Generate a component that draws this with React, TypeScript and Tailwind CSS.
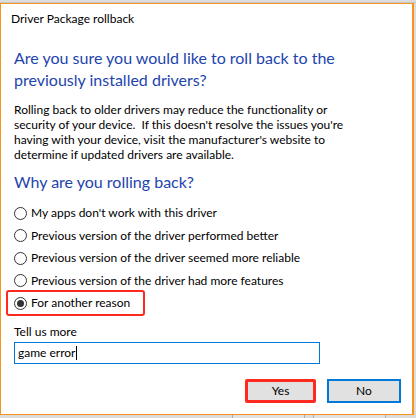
import React from 'react'

const reasons = [
  "My apps don't work with this driver",
  'Previous version of the driver performed better',
  'Previous version of the driver seemed more reliable',
  'Previous version of the driver had more features',
  'For another reason',
]

const bodyLines = [
  'Rolling back to older drivers may reduce the functionality or',
  "security of your device.\u00a0 If this doesn't resolve the issues you're",
  "having with your device, visit the manufacturer's website to",
  'determine if updated drivers are available.',
]

const Radio = ({ checked }: { checked?: boolean }) => (
  <span className="w-[13px] h-[13px] rounded-full border border-[#333] bg-white flex items-center justify-center shrink-0">
    {checked && <span className="w-[7px] h-[7px] rounded-full bg-[#333]" />}
  </span>
)

export default function App() {
  const font = { fontFamily: 'Lato, "Noto Sans", sans-serif' }
  return (
    <div className="w-[416px] h-[418px] bg-[#dcdcdc] overflow-hidden relative" style={font}>
      <div className="h-[3px] border-b border-[#c8c8c8]" />
      <div className="w-[414px] h-[412px] bg-white border border-[#f7941d] border-r-2 flex flex-col">
        <div className="pt-[7px] pl-[10px] text-[12px] leading-[16px] text-black">Driver Package rollback</div>

        <div className="px-[13px] flex flex-col">
          <div className="mt-[20px] text-[16px] leading-[22px] text-[#1e44ae] whitespace-nowrap">
            Are you sure you would like to roll back to the<br />previously installed drivers?
          </div>
          <div className="mt-[11px] text-[12px] leading-[15px] text-black whitespace-nowrap">
            {bodyLines.map(l => <div key={l}>{l}</div>)}
          </div>
          <div className="mt-[9px] text-[16px] leading-[22px] text-[#1e44ae]">Why are you rolling back?</div>

          <div className="mt-[9px] flex flex-col">
            {reasons.map((r, i) => (
              <div key={r} className="h-[22.5px] flex items-center gap-[4px] text-[12px] text-black relative">
                <Radio checked={i === 4} />
                <span>{r}</span>
                {i === 4 && <span className="absolute left-[-8px] top-[-2px] w-[139px] h-[26px] border-2 border-[#ff2a1f] rounded-[3px]" />}
              </div>
            ))}
          </div>

          <div className="mt-[9px] text-[12px] leading-[15px] text-black">Tell us more</div>
          <div className="mt-[3px] w-[306px] h-[22px] border border-[#0078d7] flex items-center pl-[3px] text-[12px] text-black">
            game error<span className="w-px h-[14px] bg-black ml-[1px]" />
          </div>

          <div className="mt-[15px] flex justify-end gap-[11px]">
            <button className="w-[71px] h-[24px] bg-[#e1e1e1] border-[3px] border-[#ff2a1f] rounded-[2px] text-[12px] text-black">Yes</button>
            <button className="w-[74px] h-[24px] bg-[#e1e1e1] border-2 border-[#0078d7] text-[12px] text-black mr-[-2px]">No</button>
          </div>
        </div>
      </div>
      <div className="flex gap-[8px] pl-[232px]">
        <div className="w-[73px] h-[3px] bg-[#e1e1e1] border-x border-[#adadad]" />
        <div className="w-[73px] h-[3px] bg-[#e1e1e1] border-x border-[#adadad]" />
      </div>
    </div>
  )
}
